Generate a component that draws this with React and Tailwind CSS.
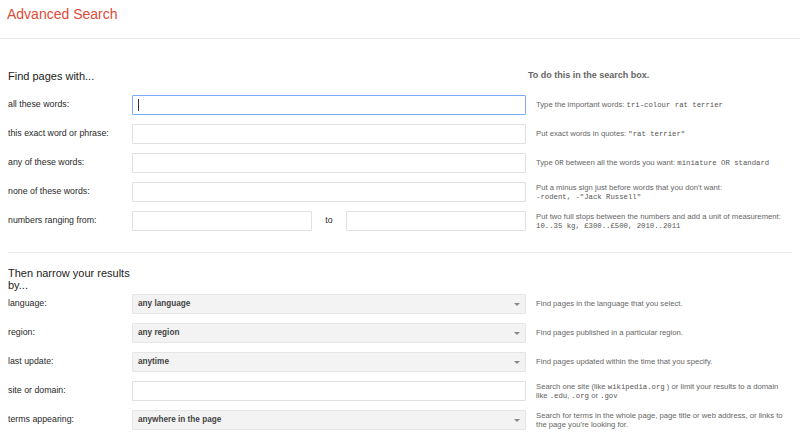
const words = [
  {
    label: "all these words:",
    focused: true,
    hint: (
      <>
        Type the important words: <Mono>tri-colour rat terrier</Mono>
      </>
    ),
  },
  {
    label: "this exact word or phrase:",
    hint: (
      <>
        Put exact words in quotes: <Mono>"rat terrier"</Mono>
      </>
    ),
  },
  {
    label: "any of these words:",
    hint: (
      <>
        Type <Mono>OR</Mono> between all the words you want: <Mono>miniature OR standard</Mono>
      </>
    ),
  },
  {
    label: "none of these words:",
    hint: (
      <>
        Put a minus sign just before words that you don't want:
        <br />
        <Mono>-rodent, -"Jack Russell"</Mono>
      </>
    ),
  },
];

const narrow = [
  { label: "language:", select: "any language", hint: "Find pages in the language that you select." },
  { label: "region:", select: "any region", hint: "Find pages published in a particular region." },
  { label: "last update:", select: "anytime", hint: "Find pages updated within the time that you specify." },
  {
    label: "site or domain:",
    hint: (
      <>
        Search one site (like <Mono>wikipedia.org</Mono> ) or limit your results to a domain like{" "}
        <Mono>.edu</Mono>, <Mono>.org</Mono> or <Mono>.gov</Mono>
      </>
    ),
  },
  {
    label: "terms appearing:",
    select: "anywhere in the page",
    hint: "Search for terms in the whole page, page title or web address, or links to the page you're looking for.",
  },
];

function Mono({ children }) {
  return (
    <span className="font-['Liberation_Mono',monospace] text-[7.3px] leading-none text-[#555]">
      {children}
    </span>
  );
}

function TextBox({ focused, className = "" }) {
  return (
    <div
      className={`h-[20px] rounded-[1px] border bg-white flex items-center ${
        focused ? "border-[#7baaf7]" : "border-[#e0e0e0]"
      } ${className}`}
    >
      {focused && <span className="ml-[5px] w-px h-[12px] bg-[#333]" />}
    </div>
  );
}

function Select({ value }) {
  return (
    <div className="w-[394px] h-[20px] rounded-[1px] border border-[#e6e6e6] bg-[#f3f3f3] flex items-center justify-between pl-[5px] pr-[5px]">
      <span className="text-[8.2px] font-bold text-[#444]">{value}</span>
      <span className="w-0 h-0 border-l-[3px] border-r-[3px] border-t-[3px] border-l-transparent border-r-transparent border-t-[#888]" />
    </div>
  );
}

function Row({ label, children, hint }) {
  return (
    <div className="flex items-center mt-[9px]">
      <div className="w-[124px] text-[8.8px] text-[#2a2a2a]">{label}</div>
      {children}
      <div className="ml-[10px] w-[254px] text-[7.7px] leading-[9.5px] text-[#666]">{hint}</div>
    </div>
  );
}

export default function App() {
  return (
    <div className="w-[800px] h-[433px] bg-white font-['Liberation_Sans',Arial,sans-serif] overflow-hidden">
      <div className="h-[39px] border-b border-[#ebebeb] px-[7px] pt-[4px]">
        <h1 className="text-[14px] text-[#dd4b39]">Advanced Search</h1>
      </div>

      <div className="px-[8px]">
        <div className="flex items-center h-[20px] mt-[27px]">
          <h2 className="w-[520px] text-[11px] text-[#222]">Find pages with...</h2>
          <div className="text-[9px] font-bold text-[#666]">To do this in the search box.</div>
        </div>

        {words.map((w) => (
          <Row key={w.label} label={w.label} hint={w.hint}>
            <TextBox focused={w.focused} className="w-[394px]" />
          </Row>
        ))}

        <Row
          label="numbers ranging from:"
          hint={
            <>
              Put two full stops between the numbers and add a unit of measurement:
              <br />
              <Mono>10..35 kg, £300..£500, 2010..2011</Mono>
            </>
          }
        >
          <div className="w-[394px] flex items-center">
            <TextBox className="w-[180px]" />
            <span className="w-[34px] text-center text-[8.8px] text-[#2a2a2a]">to</span>
            <TextBox className="w-[180px]" />
          </div>
        </Row>

        <div className="mt-[21px] border-t border-[#ebebeb]" />

        <h2 className="mt-[14px] w-[124px] text-[11px] leading-[12px] text-[#222]">
          Then narrow your results by...
        </h2>

        <div className="-mt-[6px]">
          {narrow.map((n) => (
            <Row key={n.label} label={n.label} hint={n.hint}>
              {n.select ? <Select value={n.select} /> : <TextBox className="w-[394px]" />}
            </Row>
          ))}
        </div>
      </div>
    </div>
  );
}
